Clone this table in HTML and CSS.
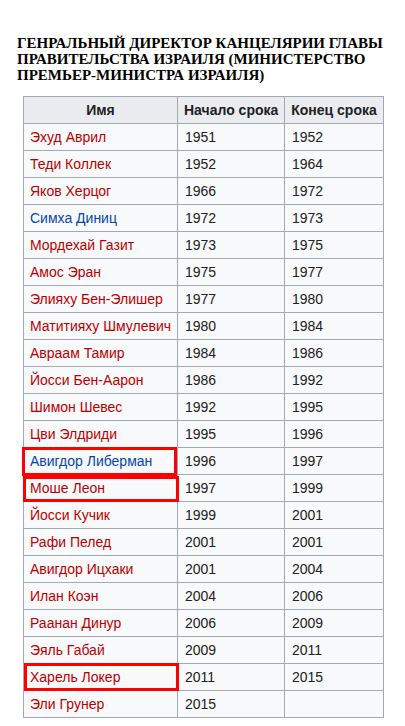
FILE: index.html
```html
<!DOCTYPE html>
<html lang="ru">
<head>
<meta charset="utf-8">
<link rel="stylesheet" href="styles.css">
</head>
<body>
<div class="page">
  <h2 class="title">ГЕНРАЛЬНЫЙ ДИРЕКТОР КАНЦЕЛЯРИИ ГЛАВЫ ПРАВИТЕЛЬСТВА ИЗРАИЛЯ (МИНИСТЕРСТВО ПРЕМЬЕР-МИНИСТРА ИЗРАИЛЯ)</h2>
  <table class="wikitable">
    <colgroup><col class="c1"><col class="c2"><col class="c3"></colgroup>
    <thead>
      <tr><th>Имя</th><th>Начало срока</th><th>Конец срока</th></tr>
    </thead>
    <tbody>
      <tr><td><a class="new">Эхуд Аврил</a></td><td>1951</td><td>1952</td></tr>
      <tr><td><a class="new">Теди Коллек</a></td><td>1952</td><td>1964</td></tr>
      <tr><td><a class="new">Яков Херцог</a></td><td>1966</td><td>1972</td></tr>
      <tr><td><a class="link">Симха Диниц</a></td><td>1972</td><td>1973</td></tr>
      <tr><td><a class="new">Мордехай Газит</a></td><td>1973</td><td>1975</td></tr>
      <tr><td><a class="new">Амос Эран</a></td><td>1975</td><td>1977</td></tr>
      <tr><td><a class="new">Элияху Бен-Элишер</a></td><td>1977</td><td>1980</td></tr>
      <tr><td><a class="new">Матитияху Шмулевич</a></td><td>1980</td><td>1984</td></tr>
      <tr><td><a class="new">Авраам Тамир</a></td><td>1984</td><td>1986</td></tr>
      <tr><td><a class="new">Йосси Бен-Аарон</a></td><td>1986</td><td>1992</td></tr>
      <tr><td><a class="new">Шимон Шевес</a></td><td>1992</td><td>1995</td></tr>
      <tr><td><a class="new">Цви Элдриди</a></td><td>1995</td><td>1996</td></tr>
      <tr><td class="hl"><a class="link">Авигдор Либерман</a></td><td>1996</td><td>1997</td></tr>
      <tr><td class="hl hl-b"><a class="new">Моше Леон</a></td><td>1997</td><td>1999</td></tr>
      <tr><td><a class="new">Йосси Кучик</a></td><td>1999</td><td>2001</td></tr>
      <tr><td><a class="new">Рафи Пелед</a></td><td>2001</td><td>2001</td></tr>
      <tr><td><a class="new">Авигдор Ицхаки</a></td><td>2001</td><td>2004</td></tr>
      <tr><td><a class="new">Илан Коэн</a></td><td>2004</td><td>2006</td></tr>
      <tr><td><a class="new">Раанан Динур</a></td><td>2006</td><td>2009</td></tr>
      <tr><td><a class="new">Эяль Габай</a></td><td>2009</td><td>2011</td></tr>
      <tr><td class="hl hl-c"><a class="new">Харель Локер</a></td><td>2011</td><td>2015</td></tr>
      <tr><td><a class="new">Эли Грунер</a></td><td>2015</td><td></td></tr>
    </tbody>
  </table>
</div>
</body>
</html>
```

FILE: styles.css
```css
html, body {
  margin: 0;
  padding: 0;
  background: #ffffff;
}

.page {
  padding: 35px 0 0 17px;
}

.title {
  margin: 0 0 13px 0;
  width: 385px;
  font-family: "Liberation Serif", "Times New Roman", serif;
  font-weight: bold;
  font-size: 15px;
  line-height: 16px;
  color: #000000;
}

.wikitable {
  margin-left: 6px;
  border-collapse: collapse;
  border: 1px solid #a2a9b1;
  background: #f8f9fa;
  color: #202122;
  font-family: "Liberation Sans", Arial, sans-serif;
  font-size: 14px;
  table-layout: fixed;
  width: 360px;
}

.c1 { width: 154px; }
.c2 { width: 107px; }
.c3 { width: 99px; }

.wikitable th,
.wikitable td {
  border: 1px solid #a2a9b1;
  padding: 5px 6px;
  line-height: 16px;
  height: 16px;
  text-align: left;
  white-space: nowrap;
}

.wikitable th {
  background: #eaecf0;
  text-align: center;
  font-weight: bold;
}

.wikitable td + td {
  padding-left: 7px;
}

.new { color: #ba0000; }
.link { color: #0645ad; }

.hl {
  position: relative;
}

.hl::after {
  content: "";
  position: absolute;
  top: -1px;
  left: -2px;
  right: 0;
  bottom: -2px;
  border: 3px solid #ff0000;
}

.hl-b::after {
  top: 1px;
  left: -1px;
  right: -2px;
  bottom: -1px;
}

.hl-c::after {
  top: -1px;
  left: 0;
  right: -2px;
  bottom: -1px;
}
```
